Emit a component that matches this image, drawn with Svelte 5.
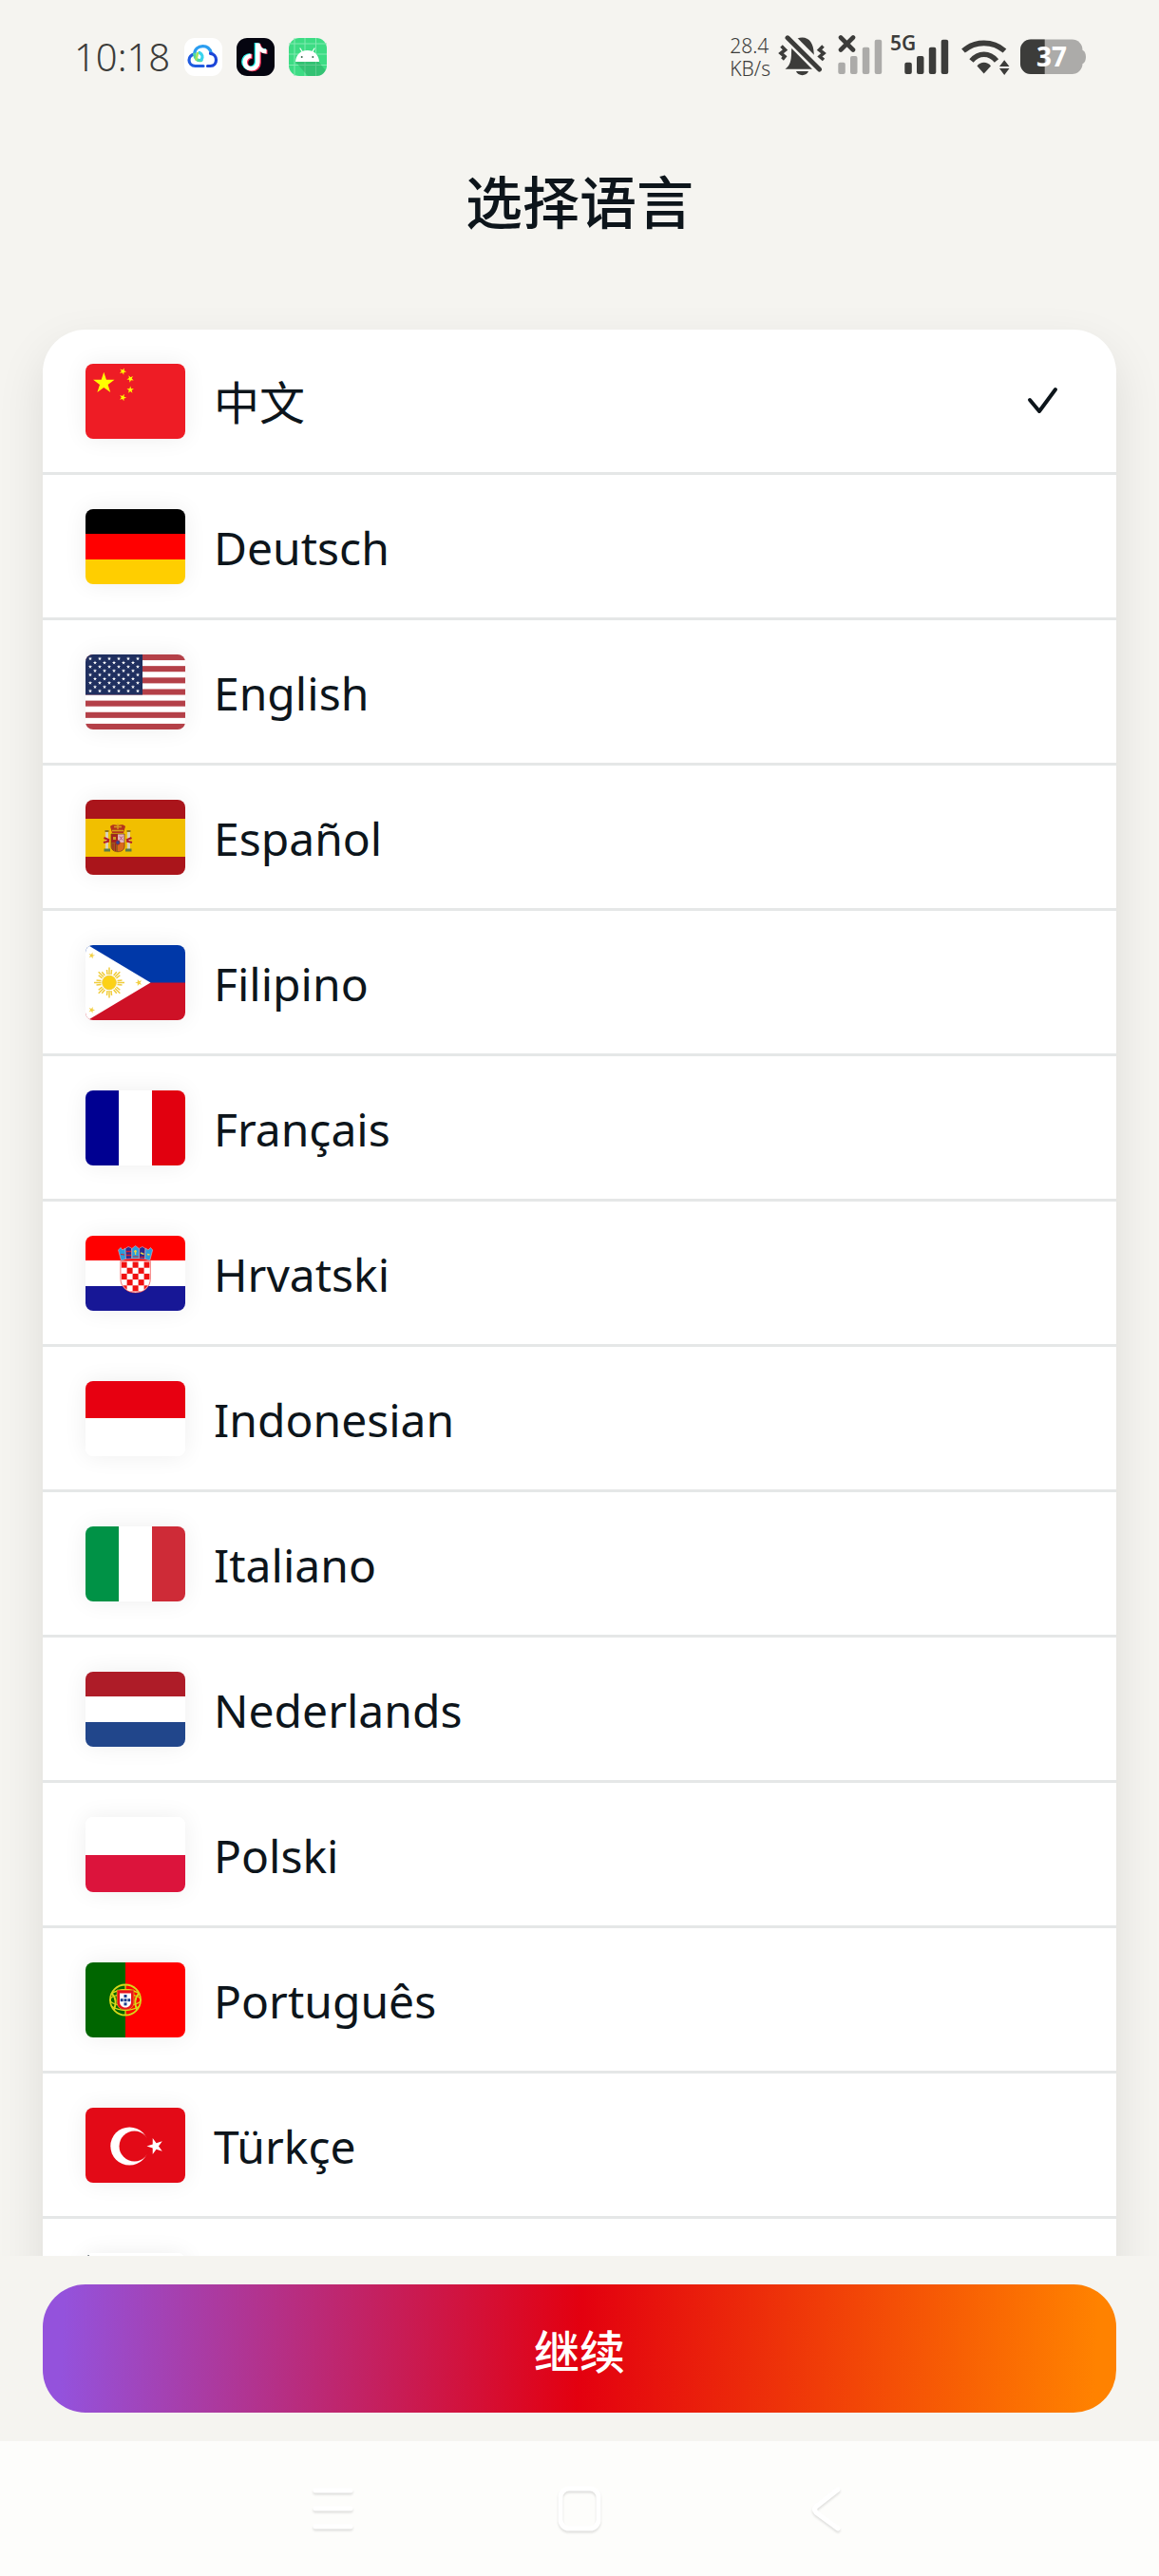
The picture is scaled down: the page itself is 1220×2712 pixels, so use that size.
<script>
  const LANGUAGES = [
    { code: 'zh', name: '中文' },
    { code: 'de', name: 'Deutsch' },
    { code: 'en', name: 'English' },
    { code: 'es', name: 'Español' },
    { code: 'fil', name: 'Filipino' },
    { code: 'fr', name: 'Français' },
    { code: 'hr', name: 'Hrvatski' },
    { code: 'id', name: 'Indonesian' },
    { code: 'it', name: 'Italiano' },
    { code: 'nl', name: 'Nederlands' },
    { code: 'pl', name: 'Polski' },
    { code: 'pt', name: 'Português' },
    { code: 'tr', name: 'Türkçe' },
    { code: 'ko', name: '' },
  ];

  // Plain striped flags: [offset, size, colour] along one axis of the 105x79 box
  const BANDS = {
    de: { rows: [[0, 26, '#000'], [26, 27, '#f00'], [53, 26, '#ffce00']] },
    es: { rows: [[0, 20, '#aa151b'], [20, 40, '#f1bf00'], [60, 19, '#aa151b']] },
    fr: { cols: [[0, 35, '#000091'], [35, 35, '#fff'], [70, 35, '#e1000f']] },
    hr: { rows: [[0, 26, '#f00'], [26, 27, '#fff'], [53, 26, '#171796']] },
    id: { rows: [[0, 39, '#e70011'], [39, 40, '#fff']] },
    it: { cols: [[0, 35, '#009246'], [35, 35, '#fff'], [70, 35, '#ce2b37']] },
    nl: { rows: [[0, 26, '#ae1c28'], [26, 27, '#fff'], [53, 26, '#21468b']] },
    pl: { rows: [[0, 40, '#fff'], [40, 39, '#dc143c']] },
    pt: { cols: [[0, 42, '#060'], [42, 63, '#f00']] },
  };

  let selected = $state('zh');

  // Five-pointed star as a points string, rot in degrees from straight up
  function star(cx, cy, r, rot = 0) {
    const pts = [];
    for (let i = 0; i < 10; i++) {
      const rad = i % 2 ? r * 0.382 : r;
      const a = ((i * 36 + rot - 90) * Math.PI) / 180;
      pts.push(`${(cx + rad * Math.cos(a)).toFixed(2)},${(cy + rad * Math.sin(a)).toFixed(2)}`);
    }
    return pts.join(' ');
  }

  const unionStars = [];
  for (let row = 0; row < 9; row++) {
    const odd = row % 2;
    for (let col = 0; col < (odd ? 5 : 6); col++) {
      unionStars.push([(odd ? 10 : 5) + col * 10, 4.5 + row * 4.25]);
    }
  }

  const checks = [];
  for (let r = 0; r < 6; r++) {
    for (let c = 0; c < 5; c++) {
      if ((r + c) % 2 === 0) checks.push([37.6 + c * 6, 27.5 + r * 6.2]);
    }
  }
</script>

<div class="screen">
  <div class="status-bar">
    <div class="status-left">
      <span class="clock">10:18</span>
      <svg class="app-icon" viewBox="0 0 40 40">
        <rect width="40" height="40" rx="11" fill="#fff" />
        <g fill="none" stroke-width="3.2" stroke-linecap="round">
          <path d="M20 29.5H11.5C7.8 29.5 5 26.8 5 23.3C5 20 7.5 17.5 10.7 17.1" stroke="#1f5be0" />
          <path d="M10.7 17.1C10.7 12 14.5 8.6 19.5 8.6C24 8.6 27 11.2 28.2 15.5" stroke="#2b9df0" />
          <path d="M24.5 29.5H27.5C31.5 29.5 33.5 26.5 33.5 23C33.5 19.5 31 16.6 27.5 16.3" stroke="#1c46d8" />
          <path d="M10.7 17C11 22 14 24.5 18 23.5" stroke="#4fd8a0" />
          <path d="M16 15.5C19 17 20 20 18 22.7" stroke="#38d5ee" />
          <path d="M12.5 22.5L14 16" stroke="#a6e45a" stroke-width="2.4" />
        </g>
      </svg>
      <svg class="app-icon" viewBox="0 0 40 40">
        <rect width="40" height="40" rx="11" fill="#050510" />
        <g fill="none" stroke-width="4.6">
          <path d="M21 5V25A6.8 6.8 0 1 1 14.2 18.2M21 5.5C21.5 10 25 13.5 31 13.5" stroke="#25f4ee" />
          <path d="M23.5 6.5V26.2A6.8 6.8 0 1 1 16.7 19.4M23.5 7C24 11.5 27.5 14.8 32.5 14.8" stroke="#fe2c55" />
          <path d="M22.3 5.5V25.5A6.8 6.8 0 1 1 15.5 18.7M22.3 6C22.8 10.8 26.3 14.1 31.5 14.1" stroke="#fff" />
        </g>
      </svg>
      <svg class="app-icon" viewBox="0 0 40 40">
        <rect width="40" height="40" rx="11" fill="#3ddc84" />
        <path d="M6 0V40M17 0V40M28.5 0V40M0 6H40M0 17H40M0 28.5H40" stroke="#82eab1" stroke-width="1" fill="none" />
        <path d="M7 25L20 40H29Q36 40 38.5 34L31.500 25Z" fill="#259c5a" opacity=".4" />
        <path d="M7 25C7.5 17.5 12.5 13 19.5 13C26.500 13 31.500 17.500 32 25Z" fill="#fff" />
        <path d="M12 11L14.5 15M27 11L24.5 15" stroke="#fff" stroke-width="1.2" stroke-linecap="round" />
        <circle cx="13.7" cy="20" r="1" fill="#3a6b50" />
        <circle cx="25.3" cy="20" r="1" fill="#3a6b50" />
      </svg>
    </div>

    <div class="status-right">
      <div class="net-speed"><span>28.4</span><span>KB/s</span></div>
      <svg width="54" height="46" viewBox="0 0 54 46">
        <path d="M7.5 35.8C12.5 32 14 27 14 19C14 8.5 18 2.5 25.5 2.5C33 2.5 37.5 9 37.7 19C37.8 26 40 32 44 35.8Z" fill="#3c3c3a" />
        <path d="M19 38H32C30.5 43.5 20.5 43.5 19 38Z" fill="#3c3c3a" />
        <path d="M8 -1L48 39.5" stroke="#f5f4f0" stroke-width="12" />
        <path d="M10 2.8L43.5 36" stroke="#3c3c3a" stroke-width="5" stroke-linecap="round" />
        <path d="M3.5 11.5L7.5 15.5L3 19L7 22.5L4.5 25.5" fill="none" stroke="#3c3c3a" stroke-width="3.6" />
        <path d="M47.5 11.5L43.5 15.5L48 19L44 22.5L48 26" fill="none" stroke="#3c3c3a" stroke-width="3.6" />
      </svg>
      <svg width="48" height="46" viewBox="0 0 48 46">
        <g fill="#acaba9">
          <rect x="1.3" y="28.7" width="7.5" height="12.3" rx="2" />
          <rect x="14" y="22" width="7.5" height="19" rx="2" />
          <rect x="26.8" y="12.7" width="7.5" height="28.3" rx="2" />
          <rect x="39.7" y="4.7" width="7.5" height="36.3" rx="2" />
        </g>
        <path d="M4 2.5L17 15.5M17 2.5L4 15.5" stroke="#3c3c3a" stroke-width="4.6" stroke-linecap="round" />
      </svg>
      <svg class="signal" width="66" height="46" viewBox="0 0 66 46">
        <g fill="#3c3c3a">
          <text class="net-type" x="0" y="16">5G</text>
          <rect x="15.3" y="28.7" width="7.5" height="12.3" rx="2" />
          <rect x="28" y="22" width="7.5" height="19" rx="2" />
          <rect x="40.8" y="12.7" width="7.5" height="28.3" rx="2" />
          <rect x="53.7" y="4.7" width="7.5" height="36.3" rx="2" />
        </g>
      </svg>
      <svg width="54" height="46" viewBox="0 0 54 46">
        <g fill="none" stroke="#3c3c3a" stroke-width="5.6">
          <path d="M3 16.5C15.5 5.6 34 5.6 46.5 16.5" />
          <path d="M11.5 27C19 18 30.5 18 38 27" />
        </g>
        <path d="M17.5 32.5C21 27.5 28.5 27.5 32 32.5L24.7 40.5Z" fill="#3c3c3a" />
        <path d="M46.2 23.5L54 33.5V36L46.2 45L39 36V33Z" fill="#f5f4f0" />
        <path d="M46.2 26.3L51.5 33H41ZM46.2 42L51.5 35H41Z" fill="#3c3c3a" />
      </svg>
      <svg width="70" height="46" viewBox="0 0 70 46">
        <rect x="1" y="4.5" width="65.5" height="36.5" rx="11" fill="#acaba9" />
        <path d="M65 16H67Q70 18 70 23T67 30H65Z" fill="#acaba9" />
        <path d="M26.7 4.5H12A11 11 0 0 0 1 15.5V30A11 11 0 0 0 12 41H26.7Z" fill="#3c3c3a" />
        <text class="battery-level" x="34" y="33" text-anchor="middle">37</text>
      </svg>
    </div>
  </div>

  <h1>选择语言</h1>

  <main>
    <div class="card" role="radiogroup" aria-label="选择语言">
      {#each LANGUAGES as lang (lang.code)}
        <label class="row">
          <input type="radio" name="language" value={lang.code} bind:group={selected} />
          <svg class="flag" viewBox="0 0 105 79">
            {#each BANDS[lang.code]?.rows ?? [] as [y, height, fill]}
              <rect x="0" {y} width="105" {height} {fill} />
            {/each}
            {#each BANDS[lang.code]?.cols ?? [] as [x, width, fill]}
              <rect {x} y="0" {width} height="79" {fill} />
            {/each}

            {#if lang.code === 'zh'}
              <rect width="105" height="79" fill="#ee1c25" />
              <g fill="#ff0">
                <polygon points={star(19.3, 20.5, 11.8)} />
                <polygon points={star(39.3, 8, 3.9, 23)} />
                <polygon points={star(47.2, 15.8, 3.9, 45)} />
                <polygon points={star(47.2, 27.5, 3.9)} />
                <polygon points={star(39.3, 35.5, 3.9, 20)} />
              </g>
            {:else if lang.code === 'en'}
              <rect width="105" height="79" fill="#fff" />
              {#each [0, 1, 2, 3, 4, 5, 6] as i}
                <rect x="0" y={(i * 2 * 79) / 13} width="105" height={79 / 13} fill="#b44048" />
              {/each}
              <rect width="60" height="42.5" fill="#1f2f5f" />
              {#each unionStars as [x, y]}
                <polygon points={star(x, y, 2.2)} fill="#fff" />
              {/each}
            {:else if lang.code === 'es'}
              <g>
                <rect x="21" y="34" width="3" height="18" fill="#d9d2b8" />
                <rect x="44" y="34" width="3" height="18" fill="#d9d2b8" />
                <path d="M19.5 40L25 42.5M19 45L25 43.5M48.5 40L43 42.5M49 45L43 43.5" stroke="#b3202a" stroke-width="2.2" />
                <path d="M19.5 51.5H26V54.5H19.5ZM42 51.5H48.5V54.5H42Z" fill="#5d7a4a" />
                <path d="M20.5 33H24.5M43.5 33H47.5" stroke="#8f7422" stroke-width="2" />
                <path d="M26 28C28 25.5 31 26 34 27C37 26 40 25.5 42 28L40 35H28Z" fill="#b3361d" />
                <path d="M28 32.5H40M30 28.5H38M34 25V31" stroke="#d8a21b" stroke-width="1.3" />
                <path d="M27 36H34V45H27Z" fill="#a5221f" />
                <path d="M34 36H41V45H34Z" fill="#e3b3bb" />
                <path d="M27 45H34V54.5C29 54 27 52 27 49Z" fill="#9c5a1c" />
                <path d="M34 45H41V49C41 52 39 54 34 54.5Z" fill="#d96a1d" />
                <path d="M29 46V53M31.5 46V54" stroke="#a5221f" stroke-width="1" />
                <path d="M36 38.5L39 42.5M39 38.5L36 42.5" stroke="#b0547a" stroke-width="1" />
                <path d="M29 42V39H32V42Z" fill="#c99a25" />
                <circle cx="34" cy="45" r="2.2" fill="#2f4a9a" stroke="#a5221f" stroke-width=".8" />
                <path d="M27 36H41V49C41 52.5 38 54.7 34 54.7S27 52.5 27 49Z" fill="none" stroke="#7c3f1e" stroke-width=".8" />
              </g>
            {:else if lang.code === 'fil'}
              <rect width="105" height="40" fill="#0038a8" />
              <rect y="39.5" width="105" height="39.5" fill="#ce1126" />
              <path d="M0 -1.5L68.5 39.5L0 80.5Z" fill="#fff" />
              <g fill="#fcd116" stroke="#f0cc3c">
                <circle cx="25" cy="39.5" r="7.3" />
                {#each [0, 45, 90, 135, 180, 225, 270, 315] as a}
                  <path d="M25 31V23.5M23 31L22.5 26M27 31L27.5 26" stroke-width="1.5" transform="rotate({a} 25 39.5)" />
                {/each}
              </g>
              <g fill="#f2cf45">
                <polygon points={star(6.5, 11, 3.6, 15)} />
                <polygon points={star(6.5, 68.3, 3.6, 20)} />
                <polygon points={star(56, 39.5, 3.8, -18)} />
              </g>
            {:else if lang.code === 'hr'}
              <path d="M36.9 26.5H68.3V45C68.3 54 61.5 60 52.6 60S36.9 54 36.9 45Z" fill="#fff" />
              <clipPath id="hr-shield">
                <path d="M37.6 27H67.6V45C67.6 53.5 61 59.3 52.6 59.3S37.6 53.5 37.6 45Z" />
              </clipPath>
              <g clip-path="url(#hr-shield)" fill="#f01010">
                {#each checks as [x, y]}
                  <rect {x} {y} width="6" height="6.2" />
                {/each}
              </g>
              <path d="M36.9 26.5H68.3V45C68.3 54 61.5 60 52.6 60S36.9 54 36.9 45Z" fill="none" stroke="#f01818" stroke-width=".6" />
              <g stroke="#d9b6c0" stroke-width=".6">
                <path d="M34.5 15L37 12.5L39 15L42 13L42.5 24.5L37.5 26Z" fill="#2a9fdc" />
                <path d="M42 13.5L45 11.5L48.5 13L48.8 24L42.5 24.5Z" fill="#2a2a8f" />
                <path d="M48.8 13.5L52.6 10.5L56.4 13.5V24H48.8Z" fill="#2a9fdc" />
                <path d="M56.7 13L60 11.5L63 13.5L62.7 24.5L56.4 24Z" fill="#2a2a8f" />
                <path d="M63.2 13L66 15L68.5 12.5L70.7 15L67.7 26L62.7 24.5Z" fill="#2a9fdc" />
              </g>
              <path d="M43 16.5H48M43 20.5H48" stroke="#d81e2c" stroke-width="1.4" />
              <path d="M51 16.5H54M52.6 15V20M58 18L61.5 19.5M65 19.5L67.5 20" stroke="#e6d24a" stroke-width="1.4" />
              <path d="M37 19.5L41 20M50 22H55.5M57.5 22.5H62" stroke="#d81e2c" stroke-width="1" />
            {:else if lang.code === 'pt'}
              <g fill="none" stroke="#d8d81a">
                <circle cx="42" cy="39.5" r="16" stroke-width="1.8" />
                <ellipse cx="42" cy="39.5" rx="16" ry="6" stroke-width="1.3" />
                <path d="M42 23V56M27 33Q42 24 57 33M27 46Q42 55 57 46" stroke-width="1.3" />
                <path d="M28 33Q34 39 30 50M56 33Q50 39 54 50" stroke-width="2" />
              </g>
              <path d="M33 29H51V42C51 47 47 50 42 50S33 47 33 42Z" fill="#e8141c" stroke="#e6d81a" stroke-width=".6" />
              <path d="M36 32.5H48V41.5C48 45 45.5 47.5 42 47.5S36 45 36 41.5Z" fill="#fff" />
              <g fill="#1a3b8c">
                <rect x="40.5" y="34" width="3" height="3" />
                <rect x="40.5" y="38.2" width="3" height="3" />
                <rect x="40.5" y="42.4" width="3" height="3" />
                <rect x="36.8" y="38.2" width="2.8" height="3" />
                <rect x="44.4" y="38.2" width="2.8" height="3" />
              </g>
            {:else if lang.code === 'tr'}
              <rect width="105" height="79" fill="#e30a17" />
              <circle cx="46.3" cy="40.5" r="20" fill="#fff" />
              <circle cx="51.5" cy="40.5" r="16" fill="#e30a17" />
              <polygon points={star(73.5, 40.5, 9, -90)} fill="#fff" />
            {:else if lang.code === 'ko'}
              <rect width="105" height="79" fill="#fff" />
              <path d="M1 3L4 2L3 4Z" fill="#26323c" />
            {/if}
          </svg>
          <span class="name">{lang.name}</span>
          {#if selected === lang.code}
            <svg class="check" viewBox="0 0 36 36">
              <path d="M5 17L15 29L32 6" fill="none" stroke="#0d151b" stroke-width="4" stroke-linecap="round" stroke-linejoin="round" />
            </svg>
          {/if}
        </label>
      {/each}
    </div>
  </main>

  <footer>
    <button class="continue" type="button">继续</button>
  </footer>

  <nav>
    <button type="button" aria-label="Recent apps">
      <svg viewBox="0 0 52 52"><path d="M8 7H45M8 26H45M8 45H45" /></svg>
    </button>
    <button type="button" aria-label="Home">
      <svg viewBox="0 0 52 52"><rect x="6" y="5" width="40" height="42" rx="9" /></svg>
    </button>
    <button type="button" aria-label="Back">
      <svg viewBox="0 0 52 52"><path d="M38 6L15 24Q12 27 15 30L38 47" /></svg>
    </button>
  </nav>
</div>

<style>
  :global(body) {
    margin: 0;
    background: #f5f4f0;
  }
  .screen {
    display: flex;
    flex-direction: column;
    height: 100vh;
    background: #f5f4f0;
    color: #0d151b;
    font-family: 'Noto Sans', 'Noto Sans CJK SC', sans-serif;
  }

  .status-bar {
    display: flex;
    align-items: center;
    justify-content: space-between;
    height: 120px;
    padding: 0 77px 0 78px;
    flex-shrink: 0;
    color: #3c3c3a;
  }
  .status-left {
    display: flex;
    align-items: center;
    gap: 15px;
  }
  .clock {
    font-size: 40px;
    font-weight: 300;
    line-height: 48px;
  }
  .app-icon {
    width: 40px;
    height: 40px;
  }
  .status-right {
    display: flex;
    align-items: center;
    gap: 8px;
  }
  .net-speed {
    display: flex;
    flex-direction: column;
    font-size: 21px;
    font-weight: 300;
    line-height: 24px;
  }
  .signal {
    overflow: visible;
  }
  .net-type {
    font-size: 21px;
    font-weight: 600;
  }
  .battery-level {
    font-size: 28px;
    font-weight: 700;
    fill: #fff;
  }

  h1 {
    flex-shrink: 0;
    margin: 0;
    padding: 48px 45px 89px;
    font-size: 60px;
    font-weight: 500;
    line-height: 90px;
    text-align: center;
  }

  main {
    flex: 1;
    min-height: 0;
    padding: 0 45px;
    /* lets the card shadow show above and beside the list, cut at the footer */
    clip-path: inset(-60px 0 0 0);
  }
  .card {
    border-radius: 45px;
    background: #fff;
    box-shadow: 0 20px 50px rgba(0, 0, 0, 0.1);
  }
  .row {
    position: relative;
    display: flex;
    align-items: center;
    height: 150px;
    padding: 0 60px 0 45px;
    border-bottom: 3px solid #e5e7e7;
    cursor: pointer;
  }
  .row:last-child {
    border-bottom: none;
  }
  .row input {
    position: absolute;
    inset: 0;
    width: 100%;
    height: 100%;
    margin: 0;
    opacity: 0;
    cursor: pointer;
  }
  .flag {
    width: 105px;
    height: 79px;
    border-radius: 8px;
    box-shadow: 0 0 24px rgba(0, 0, 0, 0.07);
  }
  .name {
    flex: 1;
    padding: 4px 0 0 30px;
    font-size: 48px;
    line-height: 66px;
  }
  .check {
    width: 36px;
    height: 36px;
  }

  footer {
    flex-shrink: 0;
    padding: 30px 45px;
  }
  .continue {
    display: block;
    width: 100%;
    height: 135px;
    padding: 0;
    border: none;
    border-radius: 45px;
    background: linear-gradient(92deg, #9452dc 2%, #e3000f 50%, #ff8200 98%);
    color: #fff;
    font: inherit;
    font-size: 48px;
    font-weight: 500;
    cursor: pointer;
  }

  nav {
    display: flex;
    align-items: center;
    justify-content: center;
    gap: 208px;
    height: 142px;
    flex-shrink: 0;
    background: #fdfdfb;
  }
  nav button {
    width: 52px;
    height: 52px;
    padding: 0;
    border: none;
    background: none;
    cursor: pointer;
  }
  nav svg {
    display: block;
    width: 52px;
    height: 52px;
    fill: none;
    stroke: #fff;
    stroke-width: 5;
    stroke-linecap: round;
    filter: drop-shadow(0 2px 1px rgba(0, 0, 0, 0.12));
  }
</style>
